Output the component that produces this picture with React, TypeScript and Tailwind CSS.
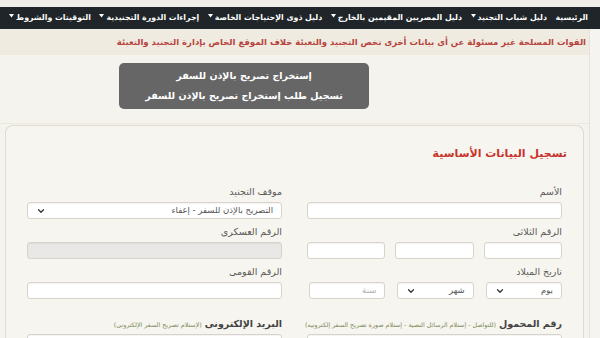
import { ChevronDown } from "lucide-react";

const navItems = [
  { label: "الرئيسية", caret: false },
  { label: "دليل شباب التجنيد", caret: true },
  { label: "دليل المصريين المقيمين بالخارج", caret: true },
  { label: "دليل ذوى الإحتياجات الخاصة", caret: true },
  { label: "إجراءات الدورة التجنيدية", caret: true },
  { label: "التوقيتات والشروط", caret: true },
];

const Caret = () => (
  <svg width="5" height="4" viewBox="0 0 5 4" className="mb-[4px] mr-[2px]">
    <path d="M0 0 L5 0 L2.5 3.5 Z" fill="#ffffff" />
  </svg>
);

const inputCls =
  "h-[17px] w-full rounded-[3px] border border-[#d8d4cb] bg-white shadow-[inset_0_1px_1px_rgba(0,0,0,0.05)]";

const Label = ({ children }: { children: React.ReactNode }) => (
  <div className="mb-[4px] h-[12px] whitespace-nowrap text-[9.5px] leading-[12px] text-[#5a5a5a]">{children}</div>
);

const Select = ({ text, className = "" }: { text: string; className?: string }) => (
  <div className={`${inputCls} flex items-center justify-between px-[8px] ${className}`}>
    <span className="text-[8.5px] text-[#555]">{text}</span>
    <ChevronDown size={10} strokeWidth={3} className="text-[#333]" />
  </div>
);

export default function App() {
  return (
    <div
      dir="rtl"
      className="h-[338px] w-[600px] overflow-hidden bg-[#f5f3ee]"
      style={{ fontFamily: '"DejaVu Sans", sans-serif' }}
    >
      <div className="h-[7px] bg-[#efede8]" />
      <nav className="flex h-[22px] items-center justify-between bg-[#1f2528] pl-[9px] pr-[12px]">
        {navItems.map((item) => (
          <div key={item.label} className="flex items-center whitespace-nowrap text-[7.8px] font-bold text-white">
            <span>{item.label}</span>
            {item.caret && <Caret />}
          </div>
        ))}
      </nav>
      <div className="flex h-[309px]">
        <div className="w-[11px] border-l border-[#e6e2d9] bg-[#f6f4f0]" />
        <div className="flex-1">
          <div className="flex h-[26px] items-center whitespace-nowrap bg-[#f0ebe0] pr-[3px] text-[8.5px] font-bold text-[#b6433c]">
            القوات المسلحة غير مسئولة عن أى بيانات أخرى تخص التجنيد والتعبئة خلاف الموقع الخاص بإدارة التجنيد والتعبئة
          </div>
          <div className="pt-[8px]">
            <div className="mr-[220px] flex h-[46px] w-[250px] flex-col items-center justify-center gap-[6px] rounded-[5px] bg-[#666666] text-[9.5px] font-bold text-white">
              <div>إستخراج تصريح بالإذن للسفر</div>
              <div>تسجيل طلب إستخراج تصريح بالإذن للسفر</div>
            </div>
          </div>
          <div className="mt-[14px] border-t border-[#ece8df] pt-[1px]">
            <div className="ml-[5px] mr-[5px] rounded-t-[8px] border border-b-0 border-[#e0dbcf] bg-[#f7f5ef] px-[21px] pt-[20px] pb-[40px]">
              <h2 className="mr-[-5px] h-[16px] text-[11px] font-bold leading-[16px] text-[#c6332c]">
                تسجيل البيانات الأساسية
              </h2>
              <div className="mt-[24px] grid grid-cols-2 gap-x-[25px]">
                <div>
                  <Label>الأسم</Label>
                  <div className={`${inputCls} mb-[7px] w-[253px]`} />
                  <Label>الرقم الثلاثى</Label>
                  <div className="mb-[7px] grid grid-cols-3 gap-[10px]">
                    <div className={inputCls} />
                    <div className={inputCls} />
                    <div className={inputCls} />
                  </div>
                  <Label>تاريخ الميلاد</Label>
                  <div className="mb-[19px] grid grid-cols-3 gap-[12px] pl-[2px]">
                    <Select text="يوم" />
                    <Select text="شهر" />
                    <div className={`${inputCls} flex items-center px-[8px] text-[8.5px] text-[#b0b0b0]`}>
                      سنة
                    </div>
                  </div>
                  <Label>
                    <span className="font-bold text-[#444]">رقم المحمول</span>{" "}
                    <span className="text-[6.3px] text-[#7b8a5a]">
                      (للتواصل - إستلام الرسائل النصية - إستلام صورة تصريح السفر إلكترونيه)
                    </span>
                  </Label>
                  <div className={inputCls} />
                </div>
                <div>
                  <Label>موقف التجنيد</Label>
                  <Select text="التصريح بالإذن للسفر - إعفاء" className="mb-[7px]" />
                  <Label>الرقم العسكرى</Label>
                  <div className={`${inputCls} mb-[7px] !bg-[#e9e8e6]`} />
                  <Label>الرقم القومى</Label>
                  <div className={`${inputCls} mb-[19px]`} />
                  <Label>
                    <span className="font-bold text-[#444]">البريد الإلكترونى</span>{" "}
                    <span className="text-[6.3px] text-[#7b8a5a]">(لإستلام تصريح السفر الإلكترونى)</span>
                  </Label>
                  <div className={inputCls} />
                </div>
              </div>
            </div>
          </div>
        </div>
      </div>
    </div>
  );
}
